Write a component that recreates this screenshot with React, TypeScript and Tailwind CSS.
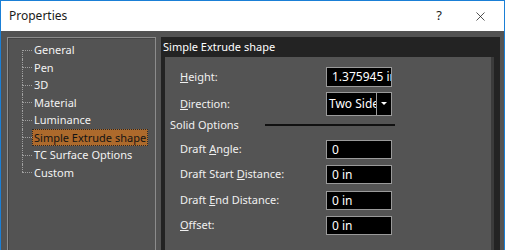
import { X } from "lucide-react";

const treeItems = [
  "General",
  "Pen",
  "3D",
  "Material",
  "Luminance",
  "Simple Extrude shape",
  "TC Surface Options",
  "Custom",
];

function TreeRow({ label, index, selected }: { label: string; index: number; selected?: boolean }) {
  const first = index === 0;
  const last = index === treeItems.length - 1;
  return (
    <div className="flex h-[17.5px] items-stretch">
      <div className="flex w-[10px] shrink-0 flex-col">
        <div className={`h-1/2 ${first ? "" : "border-l border-dotted border-[#a0a0a0]"}`} />
        <div
          className={`h-1/2 border-t border-dotted border-[#a0a0a0] ${last ? "" : "border-l"}`}
        />
      </div>
      <div className="flex items-center whitespace-nowrap">
        <span
          className={
            selected
              ? "border border-dotted border-[#2a2a2a] bg-[#ad6a2c] px-[1px] leading-[15px] text-[#141414]"
              : "px-[2px] leading-[15px] text-[#f2f2f2]"
          }
        >
          {label}
        </span>
      </div>
    </div>
  );
}

function Field({ value, className = "" }: { value: string; className?: string }) {
  return (
    <div
      className={`flex h-[19px] w-[66px] items-center overflow-hidden whitespace-nowrap border border-[#9a9a9a] bg-black pl-[5px] text-[12px] text-white ${className}`}
    >
      {value}
    </div>
  );
}

function Row({ label, children, className = "" }: { label: React.ReactNode; children: React.ReactNode; className?: string }) {
  return (
    <div className={`flex items-center pl-[15px] ${className}`}>
      <div className="w-[146px] whitespace-nowrap text-[#f0f0f0]">{label}</div>
      {children}
    </div>
  );
}

export default function App() {
  return (
    <div
      className="flex h-[250px] w-[505px] flex-col overflow-hidden border-x border-t border-[#1a7fd6] bg-[#535353] text-[11px]"
      style={{ fontFamily: '"Noto Sans", sans-serif' }}
    >
      <div className="flex h-[30px] shrink-0 items-center bg-white pl-[8px] text-[12px] text-[#1a1a1a]">
        <span>Properties</span>
        <span className="ml-auto w-[20px] text-center text-[13px]">?</span>
        <div className="ml-[24px] mr-[16px] flex items-center">
          <X className="size-[15px]" strokeWidth={1.2} />
        </div>
      </div>

      <div className="flex min-h-0 flex-1 pl-[6px] pr-[4px] pt-[6px]">
        <div className="w-[149px] shrink-0 border border-b-0 border-[#8c8c8c]">
          <div className="h-full border-l border-t border-[#454545] pl-[13px] pt-[2px]">
            {treeItems.map((item, i) => (
              <TreeRow key={item} label={item} index={i} selected={item === "Simple Extrude shape"} />
            ))}
          </div>
        </div>

        <div className="ml-[5px] flex flex-1 flex-col bg-[#232323]">
          <div className="flex h-[20px] shrink-0 items-center pl-[2px] text-white">Simple Extrude shape</div>
          <div className="ml-[4px] mr-[6px] flex-1 border-r-[3px] border-[#3b3b3b] bg-[#545454]">
            <Row label={<><u>H</u>eight:</>} className="mt-[10px] h-[20px]">
              <Field value="1.375945 in" className="h-[20px]" />
            </Row>
            <Row label={<><u>D</u>irection:</>} className="mt-[5px] h-[24px]">
              <div className="flex h-[24px] w-[66px] border border-[#9a9a9a] bg-black text-white">
                <div className="flex flex-1 items-center overflow-hidden whitespace-nowrap pl-[2px] text-[12px]">Two Sides</div>
                <div className="flex w-[15px] shrink-0 items-center justify-center border-l border-[#9a9a9a]">
                  <svg width="6" height="4" viewBox="0 0 6 4">
                    <path d="M0 0 H6 L3 3 Z" fill="#ffffff" />
                  </svg>
                </div>
              </div>
            </Row>
            <div className="mt-[1px] flex h-[16px] items-center pl-[5px] text-[#f0f0f0]">
              <span className="w-[95px]">Solid Options</span>
              <div className="h-[2px] w-[130px] bg-[#111111]" />
            </div>
            <Row label={<>Draft <u>A</u>ngle:</>} className="mt-[7px] h-[19px]">
              <Field value="0" />
            </Row>
            <Row label={<>Draft Start <u>D</u>istance:</>} className="mt-[6px] h-[19px]">
              <Field value="0 in" />
            </Row>
            <Row label={<>Draft <u>E</u>nd Distance:</>} className="mt-[7px] h-[19px]">
              <Field value="0 in" />
            </Row>
            <Row label={<><u>O</u>ffset:</>} className="mt-[6px] h-[19px]">
              <Field value="0 in" />
            </Row>
          </div>
        </div>
      </div>
    </div>
  );
}
